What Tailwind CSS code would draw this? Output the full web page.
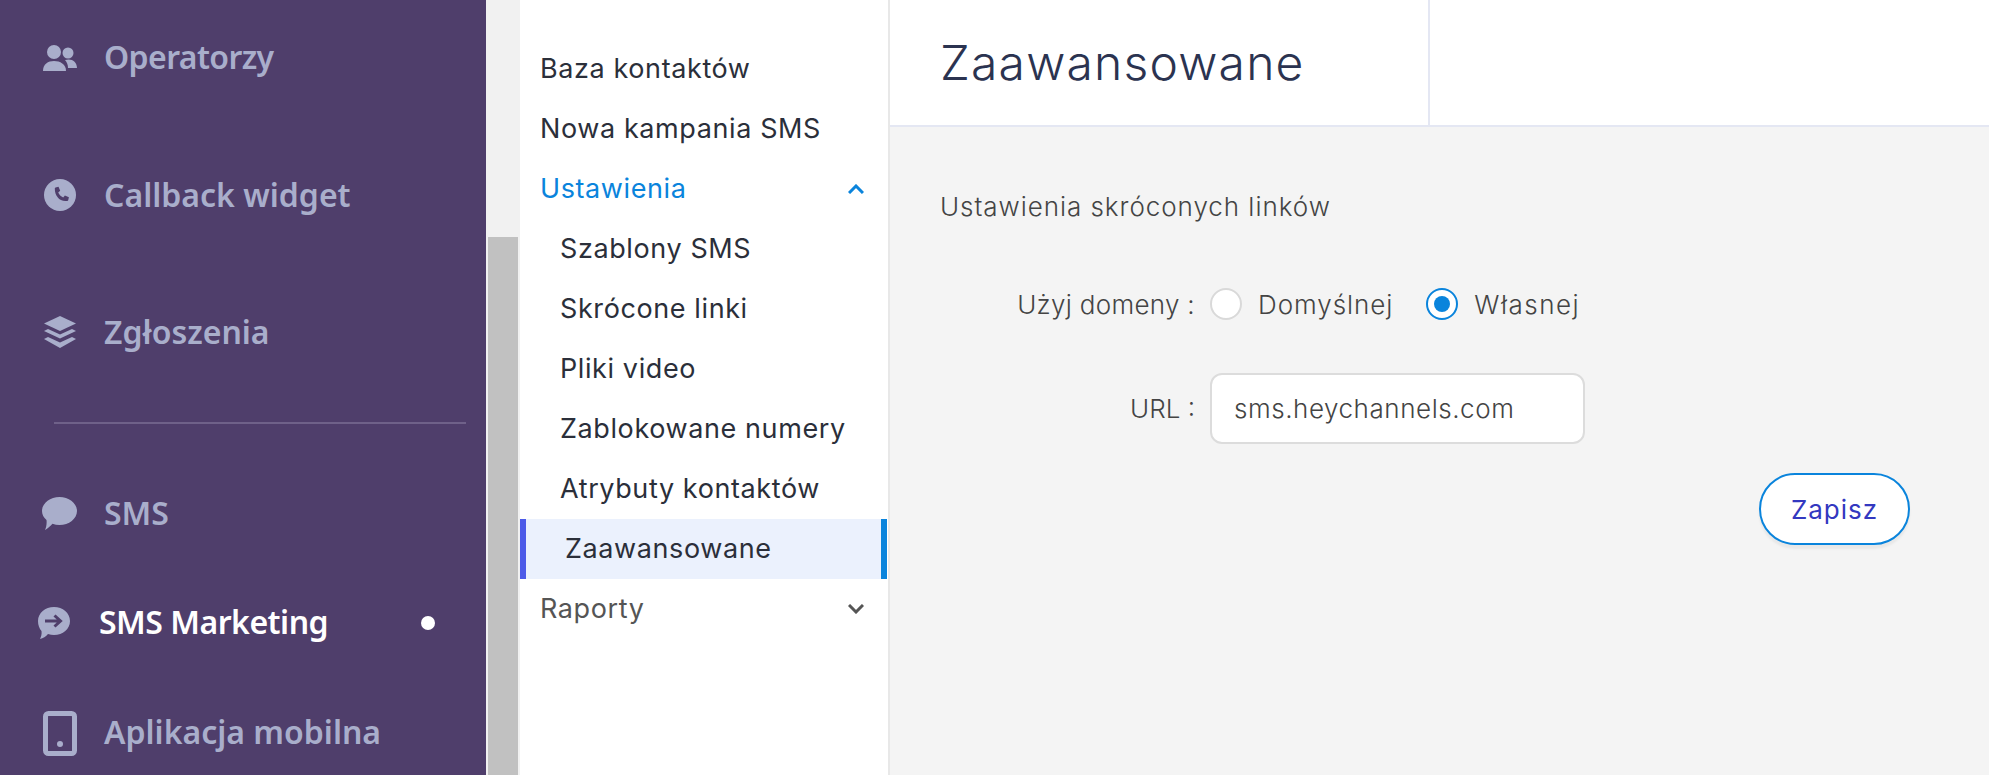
<!DOCTYPE html>
<html lang="pl">
<head>
    <meta charset="UTF-8">
    <title>Zaawansowane</title>
    <script src="https://cdn.jsdelivr.net/npm/@tailwindcss/browser@4"></script>
</head>
<body class="h-[775px] w-[1989px] overflow-hidden bg-white">
    <div class="flex h-[775px] font-['Inter',sans-serif]">
        <!-- Main sidebar -->
        <aside class="w-[486px] h-full shrink-0 overflow-hidden bg-[#4f3e6b] font-['Noto_Sans',sans-serif] text-[32px] font-semibold text-[#a9aecb]">
            <div class="-mt-[11px]">
                <a class="flex h-[137px] items-center pl-[43px] gap-[27px]">
                    <svg class="w-[34px] h-[26px]" viewBox="0 0 34 26" fill="#a9aecb"><circle cx="11" cy="7" r="7"/><circle cx="25" cy="8" r="5.5"/><path d="M0 26c0-7 5-10 11-10s12 3 12 10z"/><path d="M22 15c6-2 12 1 12 8h-9c0-3-1-6-3-8z"/></svg>
                    <span class="mb-[2px] tracking-[-0.6px]">Operatorzy</span>
                </a>
                <a class="flex h-[137px] items-center pl-[44px] gap-[28px]">
                    <svg class="w-[32px] h-[32px]" viewBox="0 0 32 32"><circle cx="16" cy="16" r="16" fill="#a9aecb"/><path d="M11.500 8.500l3 -.7 1.700 4-2 1.700c1 2.200 2.700 4 5 5l1.700-2 4 1.700-.7 3c-.2.500-.5.700-1 .7C15.500 22.900 10.800 17 10.800 9.500c0-.5.200-.8.700-1z" fill="#4f3e6b"/></svg>
                    <span>Callback widget</span>
                </a>
                <a class="flex h-[137px] items-center pl-[44px] gap-[28px]">
                    <svg class="w-[32px] h-[32px]" viewBox="0 0 32 32" fill="#a9aecb"><path d="M16 0l16 7.500-16 7.500L0 7.500z"/><path d="M4 13l12 5.500L28 13l4 2-16 7.500L0 15z"/><path d="M4 21l12 5.500L28 21l4 2-16 9L0 23z"/></svg>
                    <span>Zgłoszenia</span>
                </a>
            </div>
            <div class="ml-[54px] mr-[20px] mt-[22px] h-[2px] bg-[#6f6189]"></div>
            <div>
                <a class="flex h-[110px] mt-[34px] items-center pl-[42px] gap-[27px]">
                    <svg class="w-[35px] h-[33px]" viewBox="0 0 35 33" fill="#a9aecb"><path d="M17.500 0C27 0 35 6.200 35 14s-8 14-17.500 14c-2.500 0-4.900-.4-7-1.200C8 29.500 5 32 3 33c1-2 2-6 1.500-10C1.700 20.500 0 17.500 0 14 0 6.200 8 0 17.500 0z"/></svg>
                    <span>SMS</span>
                </a>
                <a class="flex h-[110px] items-center pl-[38px] gap-[29px] text-white">
                    <svg class="w-[32px] h-[32px]" viewBox="0 0 32 32"><path d="M16 0c8.800 0 16 6 16 14s-7.200 14-16 14c-2 0-4-.4-6-1-2 2.500-5 4.500-8 5 1-2 2-5 1.500-8C1.300 21.500 0 18 0 14 0 6 7.200 0 16 0z" fill="#a9aecb"/><path d="M7 14h15M16.500 8.500L22.500 14l-6 5.500" fill="none" stroke="#4f3e6b" stroke-width="3"/></svg>
                    <span class="flex-1 mb-[2px] tracking-[-0.5px]">SMS Marketing</span>
                    <span class="w-[14px] h-[14px] mr-[51px] rounded-full bg-white"></span>
                </a>
                <a class="flex h-[110px] items-center pl-[43px] gap-[27px]">
                    <svg class="w-[34px] h-[45px]" viewBox="0 0 34 45"><rect x="2.500" y="2.500" width="29" height="40" rx="3" fill="none" stroke="#a9aecb" stroke-width="5"/><circle cx="17" cy="33" r="3" fill="#a9aecb"/></svg>
                    <span class="mb-[2px]">Aplikacja mobilna</span>
                </a>
            </div>
        </aside>

        <!-- Scrollbar -->
        <div class="w-[34px] h-full shrink-0 bg-[#f1f1f1] pl-[2px] pr-[2px] pt-[237px]">
            <div class="h-full bg-[#c1c1c1]"></div>
        </div>

        <!-- Submenu -->
        <nav class="w-[370px] h-full shrink-0 bg-white border-r-2 border-[#e8e8e8] pt-[39px] text-[27px] tracking-[0.6px] text-[#2b2f3a]">
            <a class="flex h-[60px] items-center pl-[20px]">Baza kontaktów</a>
            <a class="flex h-[60px] items-center pl-[20px]">Nowa kampania SMS</a>
            <a class="flex h-[60px] items-center justify-between pl-[20px] pr-[24px] text-[#0a84dc]">
                Ustawienia
                <svg class="w-[16px] h-[10px]" viewBox="0 0 16 10" fill="none" stroke="#0a84dc" stroke-width="3"><path d="M1 9l7-7 7 7"/></svg>
            </a>
            <a class="flex h-[60px] items-center pl-[40px]">Szablony SMS</a>
            <a class="flex h-[60px] items-center pl-[40px]">Skrócone linki</a>
            <a class="flex h-[60px] items-center pl-[40px]">Pliki video</a>
            <a class="flex h-[60px] items-center pl-[40px]">Zablokowane numery</a>
            <a class="flex h-[60px] items-center pl-[40px]">Atrybuty kontaktów</a>
            <a class="flex h-[60px] w-[367px] items-center pl-[39px] bg-[#ebf1fd] border-l-[6px] border-r-[6px] border-l-[#4c5ae8] border-r-[#0a84dc]">Zaawansowane</a>
            <a class="flex h-[60px] items-center justify-between pl-[20px] pr-[24px] text-[#555555]">
                Raporty
                <svg class="w-[16px] h-[10px]" viewBox="0 0 16 10" fill="none" stroke="#555555" stroke-width="3"><path d="M1 1l7 7 7-7"/></svg>
            </a>
        </nav>

        <!-- Content -->
        <main class="flex-1 h-full bg-[#f4f4f4]">
            <header class="flex h-[127px] bg-white border-b-2 border-[#e4e7f3]">
                <div class="w-[540px] border-r-2 border-[#e4e7f3] pl-[50px] pt-[29px] text-[48px] tracking-[1.2px] leading-[68px] font-light text-[#2b3350]">Zaawansowane</div>
            </header>
            <section class="pl-[50px] pr-[79px] pt-[62px] text-[26px] font-light tracking-[0.95px] text-[#444444]">
                <h2 class="leading-[36px]">Ustawienia skróconych linków</h2>
                <div class="flex items-center mt-[57px] h-[44px]">
                    <span class="w-[255px] text-right tracking-[0.3px]">Użyj domeny :</span>
                    <span class="ml-[15px] w-[32px] h-[32px] rounded-full bg-white border-2 border-[#d9d9d9]"></span>
                    <span class="ml-[16px]">Domyślnej</span>
                    <span class="ml-[33px] w-[32px] h-[32px] rounded-full bg-white border-2 border-[#0a84dc] flex items-center justify-center"><span class="w-[16px] h-[16px] rounded-full bg-[#0a84dc]"></span></span>
                    <span class="ml-[16px] tracking-[1.5px]">Własnej</span>
                </div>
                <div class="flex items-center mt-[47px]">
                    <span class="w-[255px] text-right tracking-[0px]">URL :</span>
                    <div class="ml-[15px] w-[375px] h-[71px] flex items-center pl-[22px] bg-white border-2 border-[#dcdcdc] rounded-[12px] tracking-[0.55px]">sms.heychannels.com</div>
                </div>
                <div class="flex justify-end mt-[29px]">
                    <button class="w-[151px] h-[72px] rounded-full bg-white border-2 border-[#0a84dc] shadow-[0_4px_2px_#e8e8e8] font-normal text-[#3338c0]">Zapisz</button>
                </div>
            </section>
        </main>
    </div>
</body>
</html>
